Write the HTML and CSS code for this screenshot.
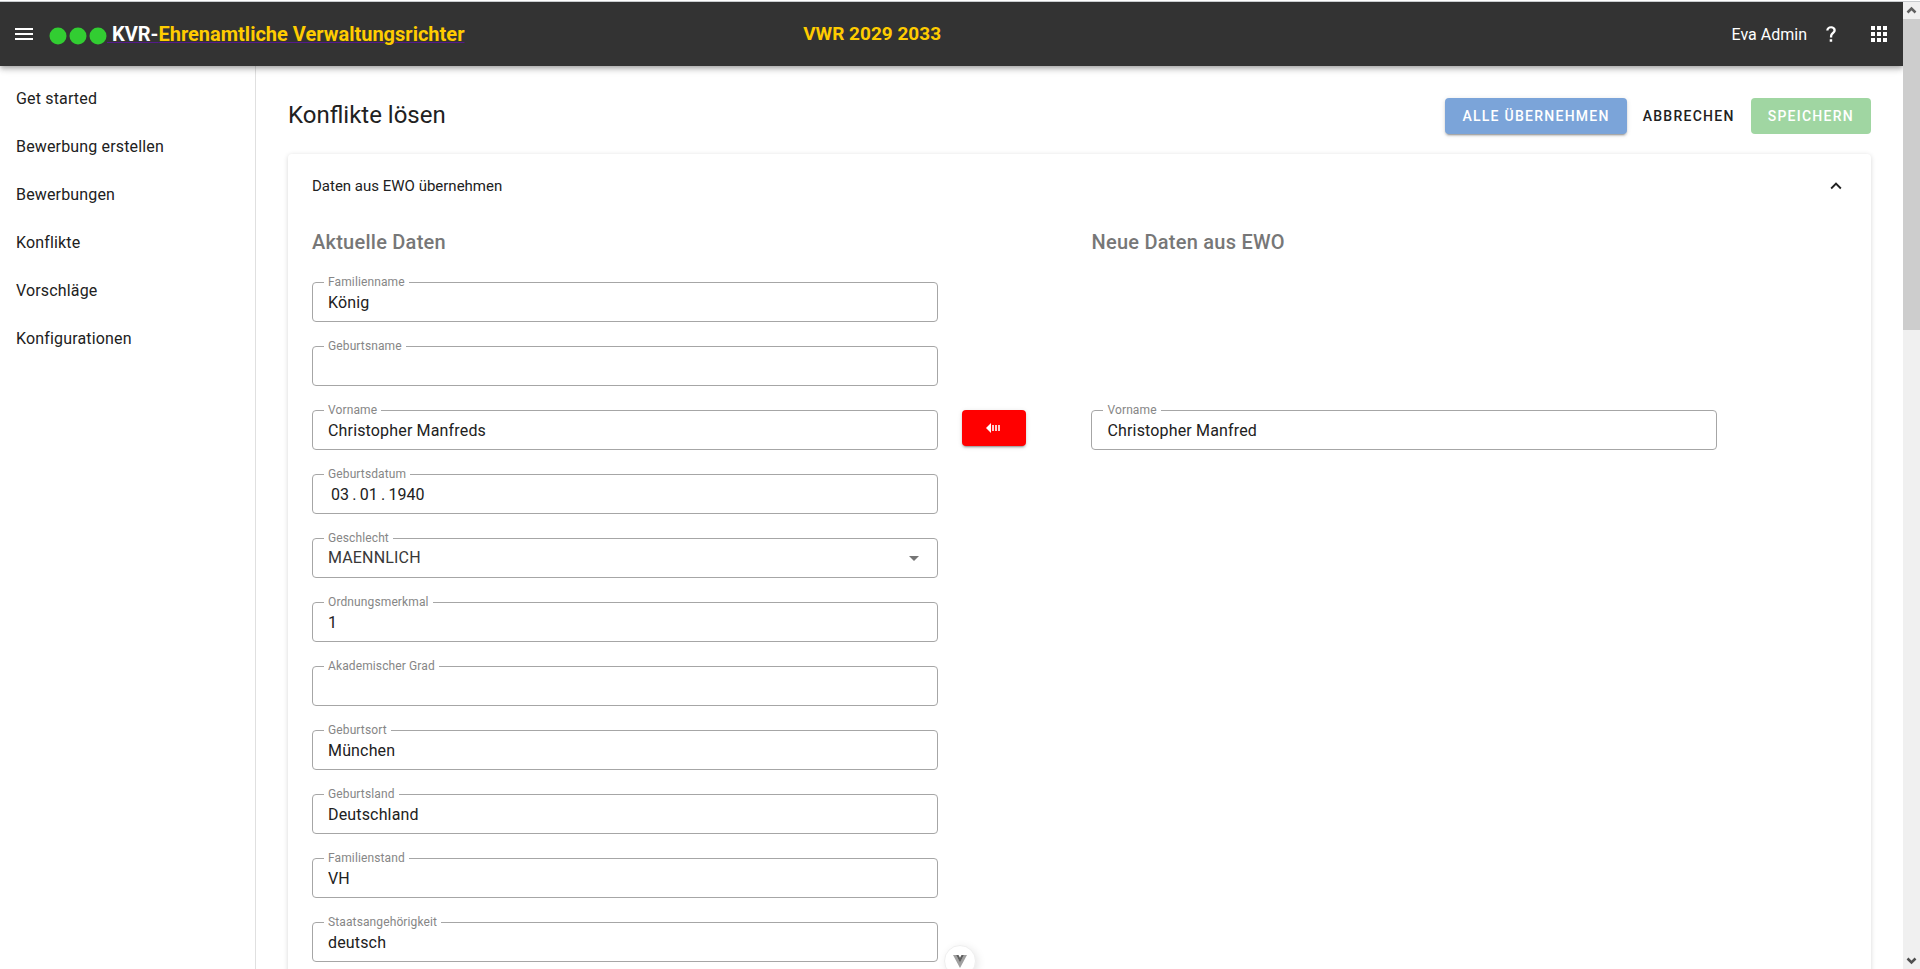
FILE: index.html
```html
<!DOCTYPE html>
<html lang="de">
<head>
<meta charset="utf-8">
<title>KVR-Ehrenamtliche Verwaltungsrichter</title>
<link rel="stylesheet" href="styles.css">
</head>
<body>
<div class="window">
<div class="app">
  <header class="topbar">
    <div class="brand">
      <button class="icon-button" type="button" aria-label="Menü">
        <svg width="24" height="24" viewBox="0 0 24 24"><path fill="currentColor" d="M3 6h18v2H3V6m0 5h18v2H3v-2m0 5h18v2H3v-2Z"/></svg>
      </button>
      <a class="brand-link" href="#">
        <svg class="dots" width="58" height="18" viewBox="0 0 58 18"><g fill="#32cd32"><circle cx="9" cy="9" r="8.5"/><circle cx="29" cy="9" r="8.5"/><circle cx="49" cy="9" r="8.5"/></g></svg>
        <span class="brand-name"><span class="brand-prefix">&nbsp;KVR-</span>Ehrenamtliche Verwaltungsrichter</span>
      </a>
    </div>
    <div class="period">VWR 2029 2033</div>
    <div class="user">
      <span class="user-name">Eva Admin</span>
      <button class="icon-button help" type="button" aria-label="Hilfe">
        <svg width="24" height="24" viewBox="0 0 24 24"><path fill="currentColor" d="M10.700 17.200h2.500v2.500h-2.500v-2.500M12 4.300c3.200.1 5.200 2 4.700 4.700-.3 1.500-1.400 2.400-2.300 3.300-.9.8-1.200 1.500-1.200 3.100h-2.300c0-2.600.6-3.600 1.700-4.600 1-.9 1.800-1.500 1.800-2.500 0-1.300-1-2-2.400-2-1.500 0-2.400.8-2.500 2.200H7.200C7.400 6 9.200 4.300 12 4.300Z"/></svg>
      </button>
      <button class="icon-button" type="button" aria-label="Apps">
        <svg width="24" height="24" viewBox="0 0 24 24"><path fill="currentColor" d="M16 20h4v-4h-4m0-2h4v-4h-4m-6-2h4V4h-4m6 4h4V4h-4m-6 10h4v-4h-4m-6 4h4v-4H4m0 10h4v-4H4m6 4h4v-4h-4M4 8h4V4H4v4ZM10 4v4h4V4zM16 10v4h4v-4z"/></svg>
      </button>
    </div>
  </header>
  <div class="body">
    <nav class="sidebar">
      <a href="#">Get started</a>
      <a href="#">Bewerbung erstellen</a>
      <a href="#">Bewerbungen</a>
      <a href="#">Konflikte</a>
      <a href="#">Vorschläge</a>
      <a href="#">Konfigurationen</a>
    </nav>
    <main class="content">
      <div class="page-head">
        <h1>Konflikte lösen</h1>
        <div class="actions">
          <button class="btn btn-blue" type="button">ALLE ÜBERNEHMEN</button>
          <button class="btn btn-text" type="button">ABBRECHEN</button>
          <button class="btn btn-green" type="button" disabled>SPEICHERN</button>
        </div>
      </div>
      <section class="panel">
        <button class="panel-title" type="button" aria-expanded="true">
          <span>Daten aus EWO übernehmen</span>
          <svg width="22" height="22" viewBox="0 0 24 24"><path fill="currentColor" d="M7.410 15.410 12 10.830l4.590 4.580L18 14l-6-6-6 6 1.410 1.410Z"/></svg>
        </button>
        <form class="fields">
          <h2 class="old">Aktuelle Daten</h2>
          <h2 class="new">Neue Daten aus EWO</h2>
          <div class="field old"><label for="f1">Familienname</label><input id="f1" type="text" value="König"></div>
          <div class="field old"><label for="f2">Geburtsname</label><input id="f2" type="text"></div>
          <div class="field old"><label for="f3">Vorname</label><input id="f3" type="text" value="Christopher Manfreds"></div>
          <button class="btn btn-red take" type="button" aria-label="Vorname übernehmen">
            <svg width="16" height="12" viewBox="0 0 16 12"><path fill="#fff" d="M0 6 5 1v10Z"/><path fill="#fff" fill-opacity=".8" d="M6 3h2v6H6zM9 3h2v6H9zM12 3h2v6h-2z"/></svg>
          </button>
          <div class="field new"><label for="n3">Vorname</label><input id="n3" type="text" value="Christopher Manfred"></div>
          <div class="field old date"><label for="f4">Geburtsdatum</label><input id="f4" type="text" value="03&#8201;.&#8201;01&#8201;.&#8201;1940"></div>
          <div class="field old"><label for="f5">Geschlecht</label><select id="f5"><option>MAENNLICH</option></select>
            <svg class="caret" width="24" height="24" viewBox="0 0 24 24"><path fill="currentColor" d="m7 10 5 5 5-5H7Z"/></svg></div>
          <div class="field old"><label for="f6">Ordnungsmerkmal</label><input id="f6" type="text" value="1"></div>
          <div class="field old"><label for="f7">Akademischer Grad</label><input id="f7" type="text"></div>
          <div class="field old"><label for="f8">Geburtsort</label><input id="f8" type="text" value="München"></div>
          <div class="field old"><label for="f9">Geburtsland</label><input id="f9" type="text" value="Deutschland"></div>
          <div class="field old"><label for="f10">Familienstand</label><input id="f10" type="text" value="VH"></div>
          <div class="field old"><label for="f11">Staatsangehörigkeit</label><input id="f11" type="text" value="deutsch"></div>
        </form>
      </section>
    </main>
  </div>
</div>
<div class="scrollbar">
  <svg width="17" height="17" viewBox="0 0 17 17"><path fill="none" stroke="#606060" stroke-width="2.500" d="m4.500 10.500 4-4 4 4"/></svg>
  <div class="thumb"></div>
  <div class="track"></div>
  <svg width="17" height="17" viewBox="0 0 17 17"><path fill="none" stroke="#505050" stroke-width="2.500" d="m4.500 6.500 4 4 4-4"/></svg>
</div>
</div>
<button class="devtools" type="button" aria-label="Vue DevTools">
  <svg width="14" height="13" viewBox="0 0 14 13"><path fill="#a0a0a0" d="M0 0h3l4 7 4-7h3L7 13Z"/><path fill="#606060" d="M3 0h2.500L7 2.700 8.500 0H11L7 7.500Z"/></svg>
</button>
</body>
</html>
```
FILE: styles.css
```css
* { box-sizing: border-box; }

body {
  margin: 0;
  font-family: Roboto, "Liberation Sans", sans-serif;
  font-size: 16px;
  line-height: 24px;
  color: #212121;
  background: #fff;
}

button, input, select { font: inherit; color: inherit; }
button { border: 0; padding: 0; background: none; }
svg { display: block; flex: none; }
h1, h2 { margin: 0; }

.window {
  display: flex;
  height: 100vh;
  overflow: hidden;
  padding-top: 1px;
}

.app {
  flex: 1;
  min-width: 0;
  display: flex;
  flex-direction: column;
  overflow: hidden;
  border-top: 1px solid #c9cccf;
}

/* top bar */
.topbar {
  position: relative;
  z-index: 1;
  flex: none;
  display: grid;
  grid-template-columns: 42% 1fr auto;
  align-items: center;
  height: 64px;
  padding: 0 12px;
  background: #333;
  color: #fff;
  box-shadow: 0 2px 4px -1px rgba(0, 0, 0, .2), 0 4px 5px rgba(0, 0, 0, .14), 0 1px 10px rgba(0, 0, 0, .12);
}
.brand, .brand-link, .user { display: flex; align-items: center; }
.brand { gap: 13px; }
.brand-link { text-decoration: none; }
.dots { margin-top: 4px; }
.brand-name {
  font-size: 20px;
  font-weight: 700;
  color: #fc0;
  text-decoration: underline #551a8b 1px;
}
.brand-prefix { color: #fff; }
.period { padding-left: 2px; font-size: 19px; font-weight: 700; color: #fc0; }
.user { gap: 12px; }
.user-name { padding-top: 1px; }
.help { margin-right: 12px; }

/* navigation and content */
.body { flex: 1; display: flex; min-height: 0; }
.sidebar {
  flex: none;
  width: 256px;
  padding-top: 9px;
  border-right: 1px solid #e0e0e0;
}
.sidebar a {
  display: block;
  padding: 12px 16px;
  color: inherit;
  letter-spacing: 0.01em;
  text-decoration: none;
}
.content { flex: 1; min-width: 0; padding: 32px; }
.page-head {
  display: flex;
  justify-content: space-between;
  margin-bottom: 20px;
}
h1 { font-size: 24px; font-weight: 400; line-height: 34px; }
.actions { display: flex; }

.btn {
  height: 36px;
  padding: 0 17px;
  border-radius: 4px;
  font-size: 14px;
  font-weight: 500;
  letter-spacing: 0.09em;
}
.btn-text { padding: 0 16px; }
.btn-blue, .btn-red { box-shadow: 0 3px 1px -2px rgba(0, 0, 0, .2), 0 2px 2px rgba(0, 0, 0, .14), 0 1px 5px rgba(0, 0, 0, .12); }
.btn-blue { background: #7ba4d9; color: #fff; }
.btn-green { background: #a0d6a2; color: #fff; }
.btn-red { display: flex; align-items: center; justify-content: center; background: #f00; }

/* expansion panel */
.panel {
  border-radius: 4px;
  background: #fff;
  box-shadow: 0 3px 1px -2px rgba(0, 0, 0, .1), 0 1px 5px rgba(0, 0, 0, .16);
}
.panel-title {
  display: flex;
  align-items: center;
  justify-content: space-between;
  width: 100%;
  height: 64px;
  padding: 0 24px;
  font-size: 15px;
}
.fields {
  display: grid;
  grid-template-columns: repeat(12, 1fr);
  gap: 24px;
  padding: 8px 24px 48px;
}
h2 {
  font-size: 20px;
  font-weight: 500;
  line-height: 32px;
  letter-spacing: 0.0125em;
  color: #777;
}
.old { grid-column: 1 / span 5; }
.take { grid-column: 6; justify-self: start; width: 64px; }
.new { grid-column: 7 / span 5; }

.field { position: relative; height: 40px; }
.field label {
  position: absolute;
  top: -8px;
  left: 12px;
  padding: 0 4px;
  background: #fff;
  color: #868686;
  font-size: 12px;
  line-height: 16px;
  letter-spacing: 0.01em;
}
.field input, .field select {
  display: block;
  width: 100%;
  height: 100%;
  margin: 0;
  padding: 0 15px;
  border: 1px solid #a6a6a6;
  border-radius: 4px;
  background: transparent;
  letter-spacing: 0.01em;
  appearance: none;
}
.field select { color: #383838; }
.field.date input { padding-left: 18px; letter-spacing: normal; }
.caret { position: absolute; top: 8px; right: 12px; color: #757575; pointer-events: none; }

/* scroll bar */
.scrollbar {
  flex: none;
  width: 17px;
  display: flex;
  flex-direction: column;
  border-top: 1px solid #c9cccf;
  background: #f0f0f0;
}
.thumb { flex: 1; background: #cdcdcd; }
.track { flex: 2; }

.devtools {
  position: fixed;
  bottom: -8px;
  left: 50%;
  z-index: 2;
  display: flex;
  justify-content: center;
  width: 32px;
  height: 32px;
  margin-left: -16px;
  padding-top: 9px;
  border: 1px solid #eee;
  border-radius: 16px;
  background: #fff;
  box-shadow: 2px 2px 8px rgba(0, 0, 0, .1);
}
```
